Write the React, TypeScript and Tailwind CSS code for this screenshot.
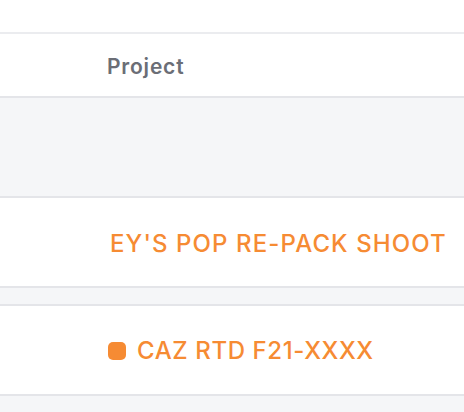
export default function App() {
  return (
    <div className="w-[464px] h-[412px] overflow-hidden bg-[#f5f6f8]" style={{ fontFamily: "Inter, Lato, sans-serif" }}>
      <div className="h-[34px] bg-white border-b-2 border-[#ebecef]" />
      <div className="h-[64px] bg-white border-b-2 border-[#e4e5e9] flex items-center pl-[107px] pt-[3px]">
        <span className="text-[21px] font-semibold tracking-[0.8px] text-[#6b6e76]">Project</span>
      </div>
      <div className="h-[100px] border-b-2 border-[#e4e5e9]" />
      <div className="h-[90px] bg-white border-b-2 border-[#e4e5e9] flex items-center pl-[110px] pt-[3px]">
        <span className="text-[24px] font-medium tracking-[1.1px] text-[#f68b33]">EY'S POP RE-PACK SHOOT</span>
      </div>
      <div className="h-[18px] border-b-2 border-[#e4e5e9]" />
      <div className="h-[90px] bg-white border-b-2 border-[#e4e5e9] flex items-center pl-[108px] pt-[2px] gap-[11px]">
        <div className="w-[18px] h-[18px] rounded-[5px] bg-[#f68b33]" />
        <span className="text-[24px] font-medium tracking-[0.6px] text-[#f68b33]">CAZ RTD F21-XXXX</span>
      </div>
    </div>
  );
}
